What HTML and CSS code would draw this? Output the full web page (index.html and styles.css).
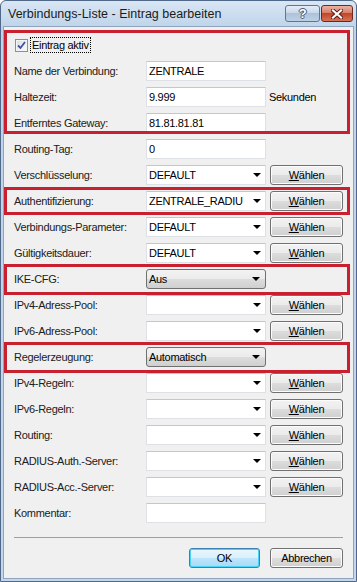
FILE: index.html
```html
<!DOCTYPE html>
<html>
<head>
<meta charset="utf-8">
<title>Verbindungs-Liste - Eintrag bearbeiten</title>
<link rel="stylesheet" href="styles.css">
</head>
<body>
<div class="window">
  <div class="titlebar">
    <span class="title">Verbindungs-Liste - Eintrag bearbeiten</span>
    <div class="caption">
      <span class="cap help">?</span>
      <span class="cap close">
        <svg width="12" height="10" viewBox="0 0 12 10">
          <path d="M2 1.5 L10 8.5 M10 1.5 L2 8.5" stroke="#5a1a10" stroke-width="4" stroke-linecap="square"/>
          <path d="M2 1.5 L10 8.5 M10 1.5 L2 8.5" stroke="#fff" stroke-width="2.2" stroke-linecap="square"/>
        </svg>
      </span>
    </div>
  </div>

  <div class="client">
    <div class="rows">
      <div class="group g-top">
        <div class="row">
          <span class="check">
            <span class="box"><svg width="9" height="9" viewBox="0 0 9 9"><path d="M1 4.5 L3.5 7 L8 1" fill="none" stroke="#3b54a0" stroke-width="1.8"/></svg></span>
            <span class="focus">Eintrag aktiv</span>
          </span>
        </div>
        <div class="row"><span class="lbl">Name der Verbindung:</span><span class="edit">ZENTRALE</span></div>
        <div class="row"><span class="lbl">Haltezeit:</span><span class="edit">9.999</span><span class="unit">Sekunden</span></div>
        <div class="row"><span class="lbl">Entferntes Gateway:</span><span class="edit">81.81.81.81</span></div>
      </div>

      <div class="row"><span class="lbl">Routing-Tag:</span><span class="edit">0</span></div>
      <div class="row"><span class="lbl">Verschlüsselung:</span><span class="edit combo">DEFAULT<i class="arrow"></i></span><span class="btn"><u>W</u>ählen</span></div>

      <div class="group g-auth">
        <div class="row"><span class="lbl">Authentifizierung:</span><span class="edit combo">ZENTRALE_RADIU<i class="arrow"></i></span><span class="btn"><u>W</u>ählen</span></div>
      </div>

      <div class="row"><span class="lbl">Verbindungs-Parameter:</span><span class="edit combo">DEFAULT<i class="arrow"></i></span><span class="btn"><u>W</u>ählen</span></div>
      <div class="row"><span class="lbl">Gültigkeitsdauer:</span><span class="edit combo">DEFAULT<i class="arrow"></i></span><span class="btn"><u>W</u>ählen</span></div>

      <div class="group g-wide">
        <div class="row"><span class="lbl">IKE-CFG:</span><span class="list">Aus<i class="arrow"></i></span></div>
      </div>

      <div class="row"><span class="lbl">IPv4-Adress-Pool:</span><span class="edit combo"><i class="arrow"></i></span><span class="btn"><u>W</u>ählen</span></div>
      <div class="row"><span class="lbl">IPv6-Adress-Pool:</span><span class="edit combo"><i class="arrow"></i></span><span class="btn"><u>W</u>ählen</span></div>

      <div class="group g-wide">
        <div class="row"><span class="lbl">Regelerzeugung:</span><span class="list">Automatisch<i class="arrow"></i></span></div>
      </div>

      <div class="row"><span class="lbl">IPv4-Regeln:</span><span class="edit combo"><i class="arrow"></i></span><span class="btn"><u>W</u>ählen</span></div>
      <div class="row"><span class="lbl">IPv6-Regeln:</span><span class="edit combo"><i class="arrow"></i></span><span class="btn"><u>W</u>ählen</span></div>
      <div class="row"><span class="lbl">Routing:</span><span class="edit combo"><i class="arrow"></i></span><span class="btn"><u>W</u>ählen</span></div>
      <div class="row"><span class="lbl">RADIUS-Auth.-Server:</span><span class="edit combo"><i class="arrow"></i></span><span class="btn"><u>W</u>ählen</span></div>
      <div class="row"><span class="lbl">RADIUS-Acc.-Server:</span><span class="edit combo"><i class="arrow"></i></span><span class="btn"><u>W</u>ählen</span></div>
      <div class="row"><span class="lbl">Kommentar:</span><span class="edit"></span></div>
    </div>

    <div class="sep"></div>

    <div class="footer">
      <span class="btn default">OK</span>
      <span class="btn">Abbrechen</span>
    </div>
  </div>
</div>
</body>
</html>
```

FILE: styles.css
```css
body {
	margin: 0;
	font-family: "Liberation Sans", Arial, sans-serif;
	font-size: 11px;
	letter-spacing: -0.3px;
	color: #000;
}

.window {
	width: 357px;
	height: 582px;
	box-sizing: border-box;
	border: 1px solid #50698a;
	border-radius: 6px 6px 0 0;
	background: linear-gradient(#d9e6f4, #bfd4ea 26px, #c3d7ec);
	display: flex;
	flex-direction: column;
}

.titlebar {
	height: 25px;
	display: flex;
	align-items: center;
	padding-left: 7px;
}

.title {
	font-size: 12.5px;
	letter-spacing: 0;
	color: #1b1b1b;
}

.caption {
	margin-left: auto;
	margin-right: 3px;
	align-self: flex-start;
	margin-top: 4px;
	display: flex;
	gap: 1px;
}

.cap {
	height: 17px;
	box-sizing: border-box;
	border: 1px solid #5d7696;
	border-radius: 3px;
	display: flex;
	align-items: center;
	justify-content: center;
}

.help {
	width: 35px;
	background: linear-gradient(#e4edf7, #c6d6e8 50%, #adc2da 50%, #bdd0e4);
	color: #fff;
	font-weight: bold;
	font-size: 13px;
	text-shadow: 0 0 1px #2d4361, 1px 0 0 #4a6182, -1px 0 0 #4a6182, 0 1px 0 #4a6182, 0 -1px 0 #4a6182;
}

.close {
	width: 32px;
	border-color: #6b2a1c;
	background: linear-gradient(#eab2a3, #d87a64 50%, #c2442a 50%, #d77358);
}

.client {
	flex: 1;
	margin: 0 2px 2px 2px;
	border: 1px solid #8ea4bf;
	background: #f0f0f0;
	padding-top: 5px;
	display: flex;
	flex-direction: column;
}

.row {
	height: 26px;
	display: flex;
	align-items: center;
	padding-left: 10px;
}

.lbl {
	width: 132px;
	color: #202020;
}

.edit {
	width: 120px;
	height: 20px;
	box-sizing: border-box;
	background: #fff;
	border: 1px solid #dde1e6;
	border-top-color: #c3c7cd;
	padding-left: 2px;
	display: flex;
	align-items: center;
	position: relative;
}

.combo {
	padding-right: 16px;
	overflow: hidden;
	white-space: nowrap;
}

.arrow {
	position: absolute;
	right: 4px;
	top: 7px;
	width: 0;
	height: 0;
	border-left: 4px solid transparent;
	border-right: 4px solid transparent;
	border-top: 4px solid #000;
}

.list {
	width: 120px;
	height: 20px;
	box-sizing: border-box;
	border: 1px solid #707070;
	border-radius: 3px;
	background: linear-gradient(#f3f3f3, #ebebeb 50%, #dddddd 50%, #cfcfcf);
	padding-left: 2px;
	display: flex;
	align-items: center;
	position: relative;
}

.list .arrow {
	right: 5px;
}

.unit {
	margin-left: 3px;
}

.btn {
	width: 73px;
	height: 20px;
	box-sizing: border-box;
	margin-left: 4px;
	border: 1px solid #707070;
	border-radius: 3px;
	background: linear-gradient(#f2f2f2, #ebebeb 50%, #dddddd 50%, #cfcfcf);
	box-shadow: inset 0 0 0 1px #fcfcfc;
	display: flex;
	align-items: center;
	justify-content: center;
}

.check {
	display: flex;
	align-items: center;
	margin-left: 1px;
}

.box {
	width: 13px;
	height: 13px;
	box-sizing: border-box;
	border: 1px solid #8e8f8f;
	background: linear-gradient(135deg, #dcdcdc, #fbfbfb);
	box-shadow: inset 0 0 0 1px #f4f4f4;
	display: flex;
	align-items: center;
	justify-content: center;
}

.focus {
	margin-left: 2px;
	padding: 1px 1px;
	border: 1px dotted #000;
}

.group {
	position: relative;
}

.group::after {
	content: "";
	position: absolute;
	left: 0;
	right: 3px;
	border: 3px solid #c8202e;
}

.g-top::after {
	top: -2px;
	bottom: 2px;
}

.g-auth::after {
	top: -1px;
	bottom: -1px;
}

.g-wide::after {
	top: -2px;
	bottom: -3px;
}

.sep {
	margin: 11px 10px 0 10px;
	border-top: 1px solid #a0a0a0;
}

.footer {
	margin-top: 10px;
	padding-right: 10px;
	display: flex;
	justify-content: flex-end;
	gap: 6px;
}

.footer .btn.default {
	width: 71px;
	border-color: #3c7fb1;
	background: linear-gradient(#eaf6fd, #d9f0fc 50%, #bee6fd 50%, #a7d9f5);
	box-shadow: inset 0 0 0 1px #48d4f8;
}
```
